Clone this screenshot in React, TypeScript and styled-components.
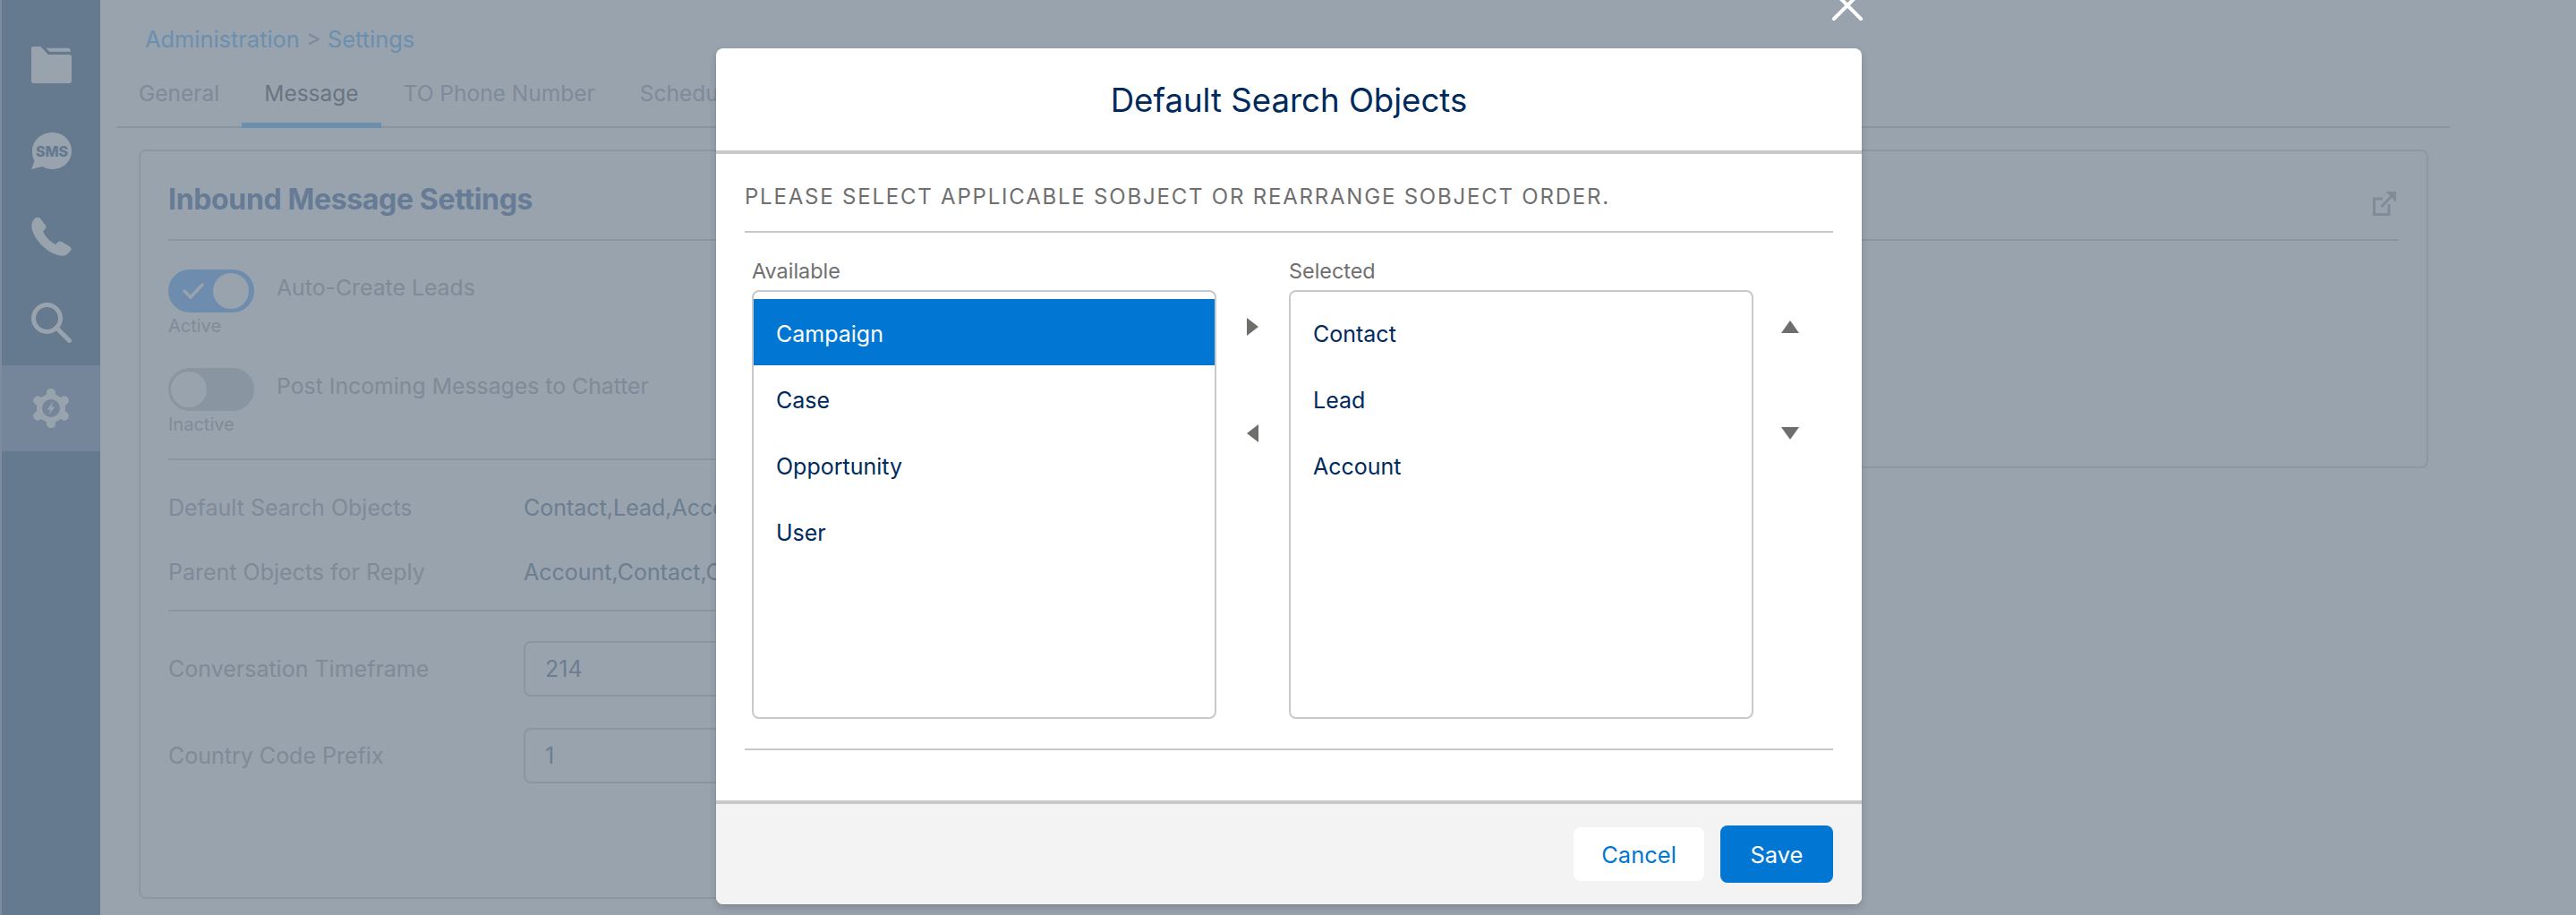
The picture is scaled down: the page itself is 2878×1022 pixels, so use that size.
import React from 'react';
import styled, { createGlobalStyle } from 'styled-components';

const GlobalStyle = createGlobalStyle`
  html, body {
    margin: 0;
    padding: 0;
    background: #fff;
  }
  body {
    font-family: Inter, "Noto Sans", sans-serif;
    -webkit-font-smoothing: antialiased;
  }
  * {
    box-sizing: border-box;
  }
`;

const Page = styled.div`
  position: relative;
  display: flex;
  width: 2878px;
  height: 1022px;
  overflow: hidden;
  background: #fff;
  padding-left: 2px;
  background-image: linear-gradient(#d2d9e4, #d2d9e4);
  background-size: 2px 100%;
  background-repeat: no-repeat;
`;

const Sidebar = styled.nav`
  flex: none;
  width: 110px;
  padding-top: 24px;
  background: #a8b9cb;
`;

const SideItem = styled.div<{ $active?: boolean }>`
  display: flex;
  align-items: center;
  justify-content: center;
  height: 96px;
  background: ${props => (props.$active ? '#c3cdde' : 'transparent')};
`;

const Main = styled.main`
  flex: 1;
  min-width: 0;
  padding: 28px 141px 0 18px;
`;

const Breadcrumb = styled.div`
  padding-left: 32px;
  font-size: 25.4px;
  line-height: 32px;
  color: #b2deff;
`;

const Crumb = styled.span`
  color: #b2deff;
`;

const CrumbSep = styled.span`
  color: #cbd6e6;
`;

const TabBar = styled.div`
  display: flex;
  height: 55px;
  margin-top: 28px;
  border-bottom: 2px solid #e6e8eb;
`;

const Tab = styled.div<{ $active?: boolean }>`
  height: 55px;
  padding: 0 25px;
  font-size: 24.5px;
  line-height: 32px;
  white-space: nowrap;
  color: ${props => (props.$active ? '#b0b2b5' : '#d4d6da')};
  border-bottom: 6px solid ${props => (props.$active ? '#b6deff' : 'transparent')};
`;

const CardRow = styled.div`
  display: flex;
  align-items: flex-start;
  justify-content: space-between;
  width: 2558px;
  margin: 24px 0 0 25px;
`;

const Card = styled.section<{ $height: number; $width: number }>`
  flex: none;
  width: ${props => props.$width}px;
  height: ${props => props.$height}px;
  padding: 0 31px;
  border: 2px solid #eaecef;
  border-radius: 8px;
`;

const CardHeader = styled.header`
  display: flex;
  justify-content: space-between;
  height: 100px;
  padding-top: 38px;
  border-bottom: 2px solid #e6e8eb;
`;

const CardTitle = styled.h2`
  margin: 0;
  font-size: 32px;
  line-height: 32px;
  font-weight: 700;
  letter-spacing: -0.35px;
  color: #aabcd5;
`;

const ExternalIcon = styled.svg`
  display: block;
  margin: 7px 3px 0 0;
`;

const ToggleRow = styled.div<{ $top: number }>`
  display: flex;
  margin-top: ${props => props.$top}px;
`;

const ToggleColumn = styled.div`
  width: 121px;
`;

const ToggleTrack = styled.div<{ $on?: boolean }>`
  display: flex;
  align-items: center;
  justify-content: ${props => (props.$on ? 'space-between' : 'flex-start')};
  width: 96px;
  height: 48px;
  padding: ${props => (props.$on ? '0 6px 0 16px' : '0 0 0 3px')};
  border-radius: 24px;
  background: ${props => (props.$on ? '#b6d9ff' : '#e6e8ec')};
`;

const ToggleKnob = styled.span`
  display: block;
  width: 40px;
  height: 40px;
  border-radius: 50%;
  background: #fff;
`;

const CheckIcon = styled.svg`
  display: block;
`;

const ToggleState = styled.div`
  margin-top: 3px;
  font-size: 20px;
  line-height: 24px;
  color: #d6d8dc;
`;

const ToggleLabel = styled.div`
  margin-top: 4px;
  font-size: 24.8px;
  line-height: 32px;
  color: #d4d6da;
`;

const Rule = styled.hr<{ $top: number }>`
  height: 2px;
  margin: ${props => props.$top}px 0 0;
  border: 0;
  background: #e6e8eb;
`;

const FieldRow = styled.div<{ $top: number }>`
  display: flex;
  align-items: center;
  margin-top: ${props => props.$top}px;
`;

const FieldLabel = styled.div`
  flex: none;
  width: 397px;
  font-size: 25px;
  line-height: 32px;
  color: #d4d6da;
`;

const FieldValue = styled.div`
  font-size: 25px;
  line-height: 32px;
  white-space: nowrap;
  color: #b4c1cd;
`;

const FieldInput = styled.input`
  width: 700px;
  height: 62px;
  padding: 0 22px;
  font: inherit;
  font-size: 25px;
  color: #b4c1cd;
  background: #fff;
  border: 2px solid #e6e8eb;
  border-radius: 8px;
  outline: none;
`;

const Backdrop = styled.div`
  position: absolute;
  inset: 0;
  display: flex;
  align-items: flex-start;
  padding: 54px 0 0 800px;
  background: rgba(0, 25, 52, 0.4);
`;

const Modal = styled.div`
  position: relative;
  display: flex;
  flex-direction: column;
  width: 1280px;
  height: 956px;
  background: #fff;
  border-radius: 8px;
  box-shadow: 0 4px 8px rgba(0, 0, 0, 0.16);
`;

const CloseIcon = styled.svg`
  position: absolute;
  top: -66px;
  right: -2px;
  display: block;
`;

const ModalHeader = styled.header`
  display: flex;
  flex: none;
  align-items: center;
  justify-content: center;
  height: 118px;
  padding-top: 2px;
  border-bottom: 4px solid #c9c9c9;
`;

const ModalTitle = styled.h1`
  margin: 0;
  font-size: 36.6px;
  line-height: 44px;
  font-weight: 400;
  color: #002a5c;
`;

const ModalBody = styled.div`
  flex: 1;
  padding: 0 32px;
`;

const Intro = styled.div`
  padding: 33px 0 23px;
  font-size: 24px;
  line-height: 30px;
  letter-spacing: 1.79px;
  white-space: nowrap;
  color: #6f6f6f;
  border-bottom: 2px solid #c9c9c9;
`;

const DualList = styled.div`
  display: flex;
  padding: 29px 8px 33px;
  border-bottom: 2px solid #c9c9c9;
`;

const ListColumn = styled.div`
  flex: none;
  width: 519px;
`;

const ListLabel = styled.div`
  margin-bottom: 7px;
  font-size: 23.4px;
  line-height: 28px;
  color: #6f6f6f;
`;

const ListBox = styled.ul`
  height: 479px;
  margin: 0;
  padding: 8px 0 0;
  list-style: none;
  background: #fff;
  border: 2px solid #c9c9c9;
  border-radius: 8px;
`;

const ListItem = styled.li<{ $selected?: boolean }>`
  display: flex;
  align-items: center;
  height: 74px;
  padding: 4px 0 0 25px;
  font-size: 25px;
  color: ${props => (props.$selected ? '#fff' : '#002a5c')};
  background: ${props => (props.$selected ? '#0176d3' : 'transparent')};
`;

const ArrowColumn = styled.div`
  display: flex;
  flex: none;
  flex-direction: column;
  align-items: center;
  gap: 99px;
  width: 81px;
  padding-top: 66px;
`;

const ArrowIcon = styled.svg`
  display: block;
`;

const ModalFooter = styled.footer`
  display: flex;
  flex: none;
  align-items: center;
  justify-content: flex-end;
  gap: 18px;
  height: 116px;
  padding: 0 32px;
  background: #f3f3f3;
  border-top: 4px solid #c9c9c9;
  border-radius: 0 0 8px 8px;
`;

const Button = styled.button<{ $primary?: boolean }>`
  width: ${props => (props.$primary ? '126px' : '146px')};
  height: ${props => (props.$primary ? '64px' : '60px')};
  padding: 0;
  font-family: inherit;
  font-size: 25.5px;
  color: ${props => (props.$primary ? '#fff' : '#0176d3')};
  background: ${props => (props.$primary ? '#0176d3' : '#fff')};
  border: 0;
  border-radius: 8px;
`;

const FolderIcon = () => (
  <svg width="45" height="41" viewBox="0 0 45 41">
    <path fill="#fff" d="M2 0H10.5L18.7 9H42.5C44 9 45 10 45 11.5V38.5C45 40 44 41 42.5 41H2.5C1 41 0 40 0 38.5V2C0 1 1 0 2 0Z" />
    <path fill="#fff" d="M16.5 1.7H41C43 1.7 44 3.5 44 5.8H20.5Z" />
  </svg>
);

const SmsIcon = () => (
  <svg width="45" height="41" viewBox="0 0 45 41">
    <path fill="#fff" d="M23.5 0C36 0 45 9 45 20.5S36 41 23.5 41C19 41 15.5 40 12.5 38L0 41L3.5 32C1.5 28.500 1 24.500 1 20.500C1 9 11 0 23.5 0Z" />
    <text x="23" y="26.500" textAnchor="middle" fontFamily="Inter, sans-serif" fontWeight="800" fontSize="16" fill="#a8b9cb">SMS</text>
  </svg>
);

const PhoneIcon = () => (
  <svg width="45" height="44" viewBox="0 0 45 44">
    <path fill="#fff" d="M3 3C5 .5 8 0 10 2L16 10C17 12 16 13.500 14.500 15L13 16.500C15.500 22 21 28 27 31L29 29C30.500 27.500 32 27 34 28L43 33.500C45 35 45 37 43.500 38.500L40 42C38 44 34 44 30 43C17 40 3 25 .5 13C0 9 1 5 3 3Z" />
  </svg>
);

const SearchIcon = () => (
  <svg width="45" height="45" viewBox="0 0 45 45" fill="none" stroke="#fff" strokeWidth="5">
    <circle cx="17.500" cy="17.500" r="15" />
    <path d="M28 28L42.500 42.500" strokeLinecap="round" />
  </svg>
);

const GearIcon = () => (
  <svg width="40" height="44" viewBox="0 0 40 44">
    <circle cx="20" cy="22" r="16" fill="#fff" />
    {[0, 60, 120, 180, 240, 300].map(angle => (
      <rect key={angle} x="15" y="0" width="10" height="14" rx="4.500" fill="#fff" transform={`rotate(${angle} 20 22)`} />
    ))}
    <circle cx="20" cy="22" r="10" fill="#c3cdde" />
    <path fill="#fff" d="M22.500 14.500L15.500 23.500H19.500L17.500 29.500L24.500 20.500H20.500Z" />
  </svg>
);

const ExternalLink = () => (
  <ExternalIcon width="26" height="27" viewBox="0 0 26 27" fill="none" stroke="#d6d8dc" strokeWidth="3">
    <path d="M11 8H1.500V25.500H18V14" />
    <path d="M9.500 17L22 4" />
    <path fill="#d6d8dc" stroke="none" d="M14 0H26V12L22 7.500L18.500 4Z" />
  </ExternalIcon>
);

export default function App() {
  return (
    <Page>
      <GlobalStyle />
      <Sidebar>
        <SideItem><FolderIcon /></SideItem>
        <SideItem><SmsIcon /></SideItem>
        <SideItem><PhoneIcon /></SideItem>
        <SideItem><SearchIcon /></SideItem>
        <SideItem $active><GearIcon /></SideItem>
      </Sidebar>
      <Main>
        <Breadcrumb>
          <Crumb>Administration</Crumb> <CrumbSep>&gt;</CrumbSep> <Crumb>Settings</Crumb>
        </Breadcrumb>
        <TabBar>
          <Tab>General</Tab>
          <Tab $active>Message</Tab>
          <Tab>TO Phone Number</Tab>
          <Tab>Scheduling</Tab>
        </TabBar>
        <CardRow>
          <Card $width={1300} $height={837}>
            <CardHeader>
              <CardTitle>Inbound Message Settings</CardTitle>
            </CardHeader>
            <ToggleRow $top={32}>
              <ToggleColumn>
                <ToggleTrack $on>
                  <CheckIcon width="24" height="18" viewBox="0 0 24 18" fill="none" stroke="#fff" strokeWidth="3.500" strokeLinecap="round">
                    <path d="M2 9L9 16L22 2" />
                  </CheckIcon>
                  <ToggleKnob />
                </ToggleTrack>
                <ToggleState>Active</ToggleState>
              </ToggleColumn>
              <ToggleLabel>Auto-Create Leads</ToggleLabel>
            </ToggleRow>
            <ToggleRow $top={35}>
              <ToggleColumn>
                <ToggleTrack>
                  <ToggleKnob />
                </ToggleTrack>
                <ToggleState>Inactive</ToggleState>
              </ToggleColumn>
              <ToggleLabel>Post Incoming Messages to Chatter</ToggleLabel>
            </ToggleRow>
            <Rule $top={26} />
            <FieldRow $top={37}>
              <FieldLabel>Default Search Objects</FieldLabel>
              <FieldValue>Contact,Lead,Account</FieldValue>
            </FieldRow>
            <FieldRow $top={40}>
              <FieldLabel>Parent Objects for Reply</FieldLabel>
              <FieldValue>Account,Contact,Case</FieldValue>
            </FieldRow>
            <Rule $top={26} />
            <FieldRow $top={33}>
              <FieldLabel>Conversation Timeframe</FieldLabel>
              <FieldInput readOnly value="214" />
            </FieldRow>
            <FieldRow $top={35}>
              <FieldLabel>Country Code Prefix</FieldLabel>
              <FieldInput readOnly value="1" />
            </FieldRow>
          </Card>
          <Card $width={1240} $height={356}>
            <CardHeader>
              <span />
              <ExternalLink />
            </CardHeader>
          </Card>
        </CardRow>
      </Main>
      <Backdrop>
        <Modal>
          <CloseIcon width="36" height="36" viewBox="0 0 36 36" fill="none" stroke="#fff" strokeWidth="4" strokeLinecap="round">
            <path d="M3 3L33 33M33 3L3 33" />
          </CloseIcon>
          <ModalHeader>
            <ModalTitle>Default Search Objects</ModalTitle>
          </ModalHeader>
          <ModalBody>
            <Intro>PLEASE SELECT APPLICABLE SOBJECT OR REARRANGE SOBJECT ORDER.</Intro>
            <DualList>
              <ListColumn>
                <ListLabel>Available</ListLabel>
                <ListBox>
                  <ListItem $selected>Campaign</ListItem>
                  <ListItem>Case</ListItem>
                  <ListItem>Opportunity</ListItem>
                  <ListItem>User</ListItem>
                </ListBox>
              </ListColumn>
              <ArrowColumn>
                <ArrowIcon width="13" height="20" viewBox="0 0 13 20"><polygon fill="#706e6b" points="0,0 13,10 0,20" /></ArrowIcon>
                <ArrowIcon width="13" height="20" viewBox="0 0 13 20"><polygon fill="#706e6b" points="13,0 0,10 13,20" /></ArrowIcon>
              </ArrowColumn>
              <ListColumn>
                <ListLabel>Selected</ListLabel>
                <ListBox>
                  <ListItem>Contact</ListItem>
                  <ListItem>Lead</ListItem>
                  <ListItem>Account</ListItem>
                </ListBox>
              </ListColumn>
              <ArrowColumn>
                <ArrowIcon width="20" height="20" viewBox="0 0 20 20"><polygon fill="#706e6b" points="10,3 20,17 0,17" /></ArrowIcon>
                <ArrowIcon width="20" height="20" viewBox="0 0 20 20"><polygon fill="#706e6b" points="0,3 20,3 10,17" /></ArrowIcon>
              </ArrowColumn>
            </DualList>
          </ModalBody>
          <ModalFooter>
            <Button>Cancel</Button>
            <Button $primary>Save</Button>
          </ModalFooter>
        </Modal>
      </Backdrop>
    </Page>
  );
}
